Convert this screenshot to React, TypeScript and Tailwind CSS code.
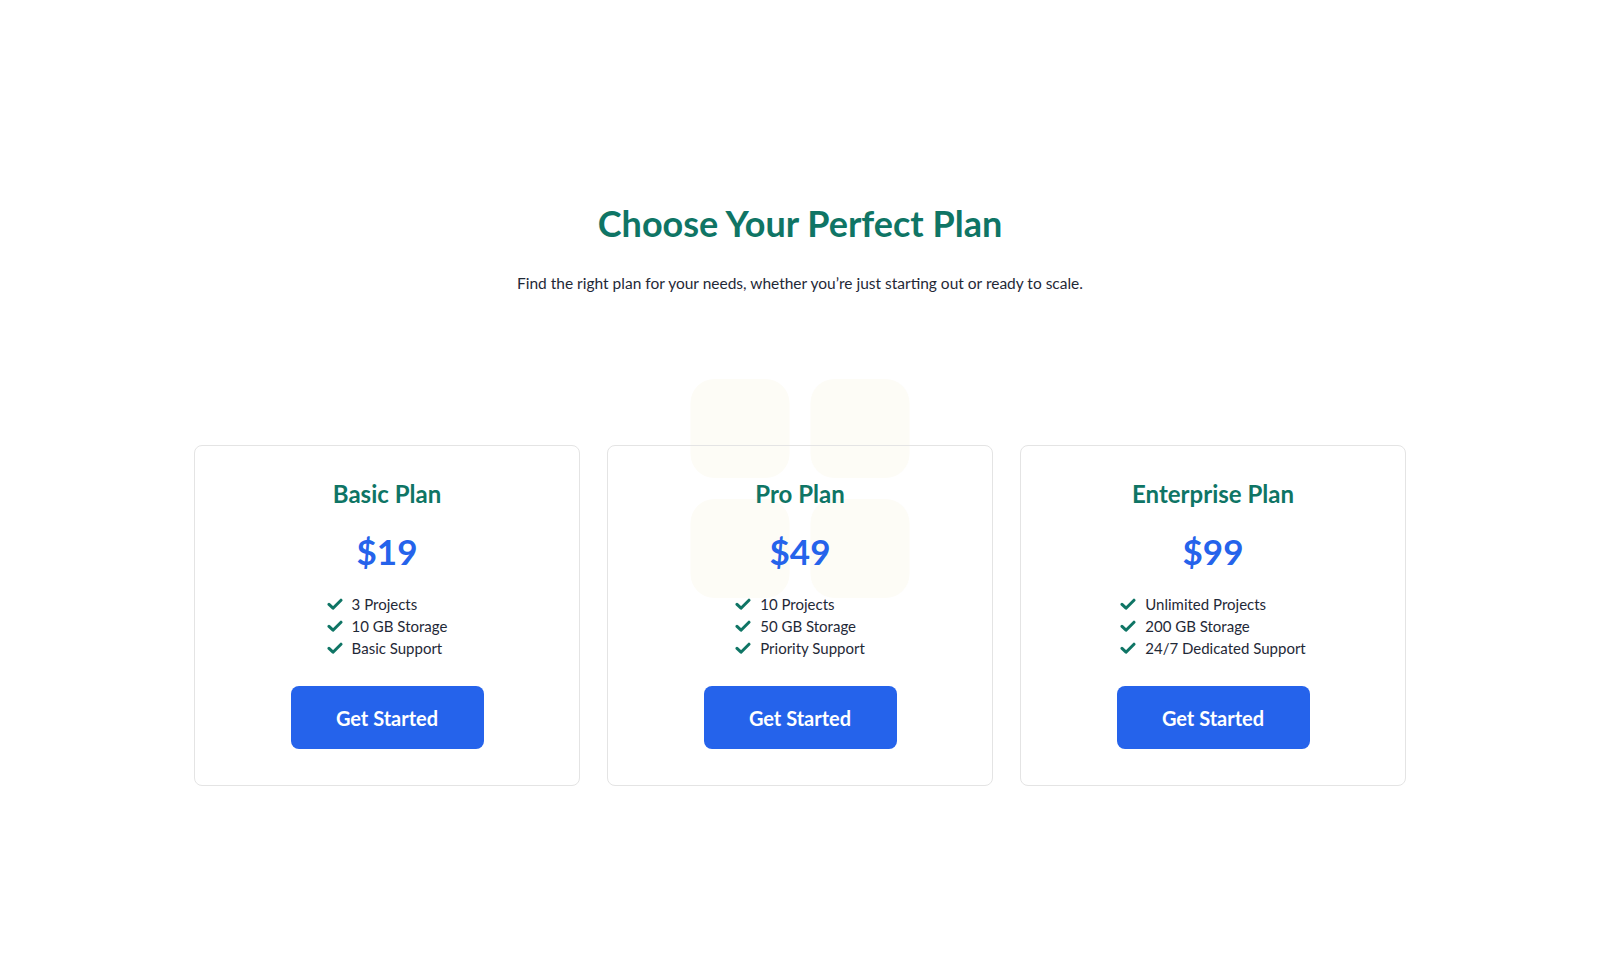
import React from 'react'

type Plan = {
  name: string
  price: string
  features: string[]
}

const plans: Plan[] = [
  { name: 'Basic Plan', price: '$19', features: ['3 Projects', '10 GB Storage', 'Basic Support'] },
  { name: 'Pro Plan', price: '$49', features: ['10 Projects', '50 GB Storage', 'Priority Support'] },
  { name: 'Enterprise Plan', price: '$99', features: ['Unlimited Projects', '200 GB Storage', '24/7 Dedicated Support'] },
]

function Check() {
  return (
    <svg viewBox="0 0 16 16" className="w-[16px] h-[16px] shrink-0" fill="none">
      <path d="M2 8.4 6 12.2 14 4.2" stroke="#0f7565" strokeWidth="3" strokeLinecap="round" strokeLinejoin="round" />
    </svg>
  )
}

function PlanCard({ plan }: { plan: Plan }) {
  return (
    <div className="relative border border-[#e4e4e4] rounded-lg pt-8 pb-9 flex flex-col items-center">
      <h3 className="text-[24px] leading-8 font-bold text-[#0f7565]">{plan.name}</h3>
      <div className="mt-[21px] text-[35px] leading-10 font-bold text-[#2563eb]">{plan.price}</div>
      <ul className="mt-[22px] flex flex-col">
        {plan.features.map((f) => (
          <li key={f} className="flex items-center gap-[9px] text-[15px] leading-[22px] text-[#1f2937]">
            <Check />
            <span>{f}</span>
          </li>
        ))}
      </ul>
      <button className="mt-[27px] w-[193px] h-[63px] rounded-lg bg-[#2563eb] text-white text-[20px] font-bold">
        Get Started
      </button>
    </div>
  )
}

export default function App() {
  return (
    <div className="min-h-screen bg-white pt-[203px] font-['Lato',sans-serif]">
      <h1 className="text-center text-[36px] leading-10 font-bold text-[#0f7565]">
        Choose Your Perfect Plan
      </h1>
      <p className="mt-7 text-center text-[15.5px] leading-6 text-[#1f2937]">
        Find the right plan for your needs, whether you’re just starting out or ready to scale.
      </p>

      <div className="relative w-[1212px] mx-auto mt-[150px]">
        {/* decorative tiles behind the middle card */}
        <div className="absolute left-1/2 -translate-x-1/2 -top-[66px] grid grid-cols-2 gap-[21px]">
          <div className="w-[99px] h-[99px] rounded-[24px] bg-[#fdfcf6]" />
          <div className="w-[99px] h-[99px] rounded-[24px] bg-[#fdfcf6]" />
          <div className="w-[99px] h-[99px] rounded-[24px] bg-[#fdfcf6]" />
          <div className="w-[99px] h-[99px] rounded-[24px] bg-[#fdfcf6]" />
        </div>
        <div className="relative grid grid-cols-3 gap-[27px]">
          {plans.map((p) => (
            <PlanCard key={p.name} plan={p} />
          ))}
        </div>
      </div>
    </div>
  )
}
